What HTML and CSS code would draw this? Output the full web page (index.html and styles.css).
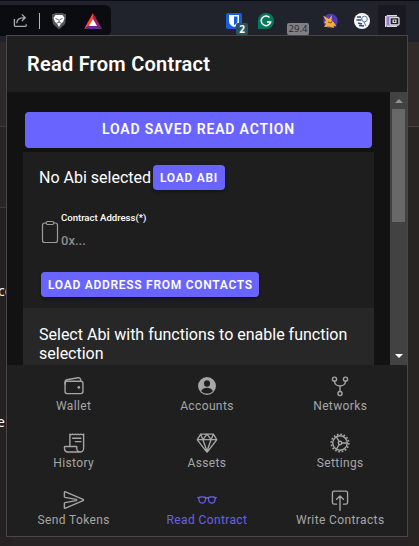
FILE: index.html
```html
<!DOCTYPE html>
<html lang="en">
<head>
<meta charset="utf-8">
<title>Read From Contract</title>
<link rel="stylesheet" href="styles.css">
</head>
<body>
<div class="toolbar">
  <div class="address-end">
    <svg class="share" viewBox="0 0 16 16"><path d="M1.500 6.500v6.500q0 1.300 1.300 1.300h10q1.300 0 1.300-1.300v-1M4 11c0-4 3-6 8.500-6M9.500 1.500 13 5 9.500 8.500"/></svg>
    <span class="divider"></span>
    <svg class="lion" viewBox="0 0 16 18"><path fill="#56575c" d="M4 1h8l1 1 2 0v4l-1 6-6 5.500L2 12 1 6V2l2 0z"/><path fill="#fff" d="M4.500 3h7l2 3-1.500 4-2 1.500L8 15l-2-3.500L4 10 2.500 6z"/><path d="M4.500 6.500 7 7.500M11.500 6.500 9 7.500M8 7v3.500M6 11l2-1 2 1" stroke="#56575c" stroke-width=".9" fill="none"/></svg>
    <svg class="bat" viewBox="0 0 18 16"><path fill="#ff4b2b" d="M9 0 0 16 9 10z"/><path fill="#9e1f63" d="m9 0 9 16-9-6z"/><path fill="#662d91" d="M0 16h18l-9-6z"/><path fill="#fff" d="m9 6-4 7h8z"/></svg>
  </div>
  <div class="extensions">
    <div class="ext vault">
      <svg viewBox="0 0 16 16"><rect width="16" height="16" rx="2" fill="#175ddc"/><path fill="#fff" d="M3 2h10v6q0 4-5 6-5-2-5-6z"/><path fill="#175ddc" d="M8 3.500h3.500V8q0 2.500-3.500 4.200z"/></svg>
      <span class="count">2</span>
    </div>
    <div class="ext grammar"><svg viewBox="0 0 16 16"><path fill="#08785c" d="M8 0a8 8 0 1 1 0 16H0V8a8 8 0 0 1 8-8z"/><path d="M11.500 4.500a4.800 4.800 0 1 0 1.200 4.500H9" stroke="#fff" stroke-width="1.500" fill="none"/></svg></div>
    <div class="ext meter"><span class="value">29.4</span></div>
    <div class="ext fox"><svg viewBox="0 0 16 16"><circle cx="8.500" cy="8" r="7.300" fill="#5139b8"/><path fill="#f5ad42" d="M1 2.500 7 6l3-4-.5 5 2.500 2.500 2.500 4-3-1 .5 2.500-4.500-1.500L2 14l2-3-2-2 2-1z"/><path d="m6 9 3 1 1-2" stroke="#825325" fill="none"/></svg></div>
    <div class="ext coins"><svg viewBox="0 0 16 16"><circle cx="8" cy="8" r="8" fill="#f6f8fb"/><path d="M3 4h4M2.500 7h5M4 10l4 1M5 12.500l5 .5" stroke="#304a70" stroke-width="1.700"/><circle cx="10.500" cy="6" r="2.800" fill="none" stroke="#6275a0"/><path d="m10 9 2 4" stroke="#6275a0"/></svg></div>
    <div class="ext purse"><svg viewBox="0 0 16 16"><path fill="#9679c8" d="M2 2.500h4v11H2z"/><path fill="#ddd8e3" d="M1 3h1.500v11H1zM3 2h10v1.500H3zM3 12.500h10V14H3z"/><rect x="6" y="4.500" width="9" height="7.500" rx="1" fill="#222329" stroke="#dedee4" stroke-width="1.300"/><rect x="8.500" y="6.500" width="4" height="3.500" fill="#ddd"/><path fill="#222" d="M9.800 7.500h1.500V9H9.800z"/></svg></div>
  </div>
</div>
<main class="backdrop">
  <div class="side left"><p class="fragment first">co</p><p class="fragment">e</p></div>
  <div class="side right"></div>
</main>
<section class="popup">
  <header class="header"><h1>Read From Contract</h1></header>
  <div class="viewport">
    <div class="content">
      <button class="button wide">LOAD SAVED READ ACTION</button>
      <div class="panel">
        <div class="abi"><span>No Abi selected</span><button class="button small">LOAD ABI</button></div>
        <div class="address">
          <svg class="clipboard" viewBox="0 0 512 512"><path d="M336 64h32a48 48 0 0 1 48 48v320a48 48 0 0 1-48 48H144a48 48 0 0 1-48-48V112a48 48 0 0 1 48-48h32"/><rect x="176" y="32" width="160" height="64" rx="26"/></svg>
          <div class="field"><label>Contract Address(*)</label><span class="placeholder">0x...</span></div>
        </div>
        <button class="button small contacts">LOAD ADDRESS FROM CONTACTS</button>
      </div>
      <div class="notice">Select Abi with functions to enable function selection</div>
    </div>
    <div class="scrollbar"><span class="up"></span><span class="thumb"></span><span class="down"></span></div>
  </div>
  <nav class="tabs">
    <a class="tab"><svg viewBox="0 0 512 512"><rect x="48" y="144" width="416" height="288" rx="48"/><path d="M411 144v-30a50 50 0 0 0-59-49L89 110a50 50 0 0 0-41 49v49"/><circle class="fill" cx="368" cy="288" r="32"/></svg><span>Wallet</span></a>
    <a class="tab"><svg viewBox="0 0 512 512"><circle class="fill" cx="256" cy="256" r="208"/><ellipse class="hole" cx="256" cy="200" rx="70" ry="76"/><path class="hole" d="M119 370c28-49 81-74 137-74s109 25 137 74c-34 42-83 62-137 62s-103-20-137-62z"/></svg><span>Accounts</span></a>
    <a class="tab"><svg viewBox="0 0 512 512"><circle cx="128" cy="96" r="48"/><circle cx="384" cy="96" r="48"/><circle cx="256" cy="432" r="48"/><path d="M256 256v128M128 144c0 75 69 112 128 112M384 144c0 75-69 112-128 112"/></svg><span>Networks</span></a>
    <a class="tab"><svg viewBox="0 0 512 512"><path d="M160 336V48l32 16 32-16 32 16 32-16 32 16 32-16 32 16 32-16 32 16 32-16v336a80 80 0 0 1-160 0v-48H48a16 16 0 0 0-16 16c0 64 7 112 80 112h288M224 144h192M288 224h128"/></svg><span>History</span></a>
    <a class="tab"><svg viewBox="0 0 512 512"><path d="m35 188 208 270a16 16 0 0 0 26 0l208-270a17 17 0 0 0 1-19L407 56a16 16 0 0 0-14-8H119a16 16 0 0 0-14 8L34 169a17 17 0 0 0 1 19zM48 176h416M400 64l-48 112-96-128M112 64l48 112 96-128M256 448l-96-272M256 448l96-272"/></svg><span>Assets</span></a>
    <a class="tab"><svg viewBox="0 0 512 512"><circle cx="256" cy="256" r="168"/><circle class="teeth" cx="256" cy="256" r="202" pathLength="32"/><circle cx="256" cy="256" r="40"/><path d="M296 256h128M236 221 172 110M236 291l-64 111"/></svg><span>Settings</span></a>
    <a class="tab"><svg viewBox="0 0 512 512"><path d="M32 72v105q0 14 14 17l260 48c18 4 18 24 0 28L46 318q-14 3-14 17v105q0 14 13 9l422-177q22-16 0-32L45 63q-13-5-13 9z"/></svg><span>Send Tokens</span></a>
    <a class="tab active"><svg viewBox="0 0 512 512"><path d="M224 232a32 32 0 0 1 64 0M448 200h24M64 200H40M64 200c0 96 16 128 80 128s80-32 80-128c0 0-16-16-80-16s-80 16-80 16zM448 200c0 96-16 128-80 128s-80-32-80-128c0 0 16-16 80-16s80 16 80 16z"/></svg><span>Read Contract</span></a>
    <a class="tab"><svg viewBox="0 0 512 512"><path d="M336 352h56a40 40 0 0 0 40-40V88a40 40 0 0 0-40-40H120a40 40 0 0 0-40 40v224a40 40 0 0 0 40 40h56M176 240l80-80 80 80M256 496V176"/></svg><span>Write Contracts</span></a>
  </nav>
</section>
</body>
</html>
```
FILE: styles.css
```css
* { box-sizing: border-box; }
body {
  margin: 0;
  position: relative;
  width: 419px;
  height: 546px;
  overflow: hidden;
  display: flex;
  flex-direction: column;
  background: #272223;
  color: #fff;
  font-family: Roboto, sans-serif;
}
.toolbar {
  height: 42px;
  flex: none;
  display: flex;
  justify-content: space-between;
  background: #20232b;
  border-top: 1px solid #0c0d14;
}
.address-end {
  width: 111px;
  height: 31px;
  margin-top: 4px;
  padding-left: 13px;
  display: flex;
  align-items: center;
  border-radius: 0 6px 6px 0;
  background: #0b0b12;
}
.share { width: 15px; height: 15px; fill: none; stroke: #a9a9ad; stroke-width: 1.4; }
.divider { width: 1px; height: 16px; margin: 0 11px; background: #b5b5b9; }
.lion { width: 16px; height: 18px; }
.bat { width: 18px; height: 16px; margin-left: 17px; }
.extensions { display: flex; padding-top: 4px; width: 201px; }
.ext {
  position: relative;
  flex: none;
  width: 32px;
  height: 32px;
  display: flex;
  align-items: center;
  justify-content: center;
}
.ext svg { width: 16px; height: 16px; }
.count {
  position: absolute;
  left: 18px;
  top: 18px;
  width: 12px;
  height: 12px;
  border-radius: 2px;
  background: #2b5260;
  font: 700 10px/12px "Open Sans", sans-serif;
  text-align: center;
}
.value {
  margin-top: 16px;
  padding: 0 2px;
  border-radius: 2px;
  background: #808084;
  color: #26272b;
  font: 500 9.500px/12px "Open Sans", sans-serif;
}
.purse { width: 28px; background: #191a21; }
.backdrop { flex: 1; display: flex; justify-content: space-between; }
.side { width: 12px; }
.left {
  display: flex;
  flex-direction: column;
  background: linear-gradient(#2d292a 0 84px, #3e3a3b 84px 85px, #282425 85px 165px, #3e3a3b 165px 166px, #252122 166px);
}
.right { background: linear-gradient(#302b29 0 84px, #48413d 84px 85px, #282422 85px); }
.fragment {
  margin: 113px 0 0 -3px;
  font: 14px/18px "Open Sans", sans-serif;
}
.fragment.first { margin: 240px 0 0 -2px; }
.popup {
  position: absolute;
  left: 6px;
  top: 35px;
  width: 402px;
  height: 502px;
  border: 1px solid #494847;
  background: #1f1f1f;
  display: flex;
  flex-direction: column;
}
.header { height: 56px; flex: none; padding: 16px 20px; }
h1 { margin: 0; font-size: 20px; line-height: 24px; font-weight: 600; letter-spacing: .24px; white-space: nowrap; }
.viewport { height: 273px; flex: none; display: flex; overflow: hidden; background: #121212; }
.content { flex: 1; padding: 20px 16px 0; }
.button {
  display: block;
  border: 0;
  margin: 0;
  background: #6a64ff;
  color: #fff;
  font-family: Roboto, sans-serif;
  font-weight: 600;
  white-space: nowrap;
}
.wide {
  width: 347px;
  height: 36px;
  margin-left: 2px;
  padding: 0 6px 2px;
  border-radius: 4px;
  font-size: 14px;
  letter-spacing: .84px;
}
.panel { width: 351px; height: 156px; margin-top: 4px; padding: 13px 16px 0; background: #1e1e1e; }
.abi { display: flex; align-items: center; gap: 2px; height: 25px; font-size: 16px; white-space: nowrap; }
.small {
  height: 25px;
  padding: 0 7px;
  border-radius: 4px;
  font-size: 12px;
  letter-spacing: .72px;
  box-shadow: 0 2px 3px #0005;
}
.address { display: flex; height: 82px; padding-top: 20px; }
.clipboard { width: 24px; height: 24px; margin: 10px -2px 0 -1px; fill: none; stroke: #9a9a9a; stroke-width: 26; }
.field { display: flex; flex-direction: column; padding: 1px 0 0 1px; }
label { font-size: 9.600px; line-height: 14px; font-weight: 500; letter-spacing: -.02px; white-space: nowrap; }
.placeholder { margin-top: 7px; font-size: 13px; line-height: 18px; font-weight: 500; color: #8c8c8c; }
.contacts { width: 218px; margin-left: 2px; }
.notice { width: 351px; height: 70px; padding: 17px 16px 0; background: #272727; font-size: 16px; line-height: 19px; }
.scrollbar {
  width: 17px;
  flex: none;
  display: flex;
  flex-direction: column;
  align-items: center;
  background: #424242;
}
.up, .down { border: 4px solid transparent; }
.up { border-top: 0; border-bottom-color: #909090; margin-top: 7px; }
.thumb { width: 13px; height: 113px; margin-top: 6px; background: #686868; }
.down { border-bottom: 0; border-top-color: #fff; margin: auto 0 7px; }
.tabs {
  flex: 1;
  display: grid;
  grid-template-columns: repeat(3, 133.300px);
  grid-auto-rows: 57px;
}
.tab {
  display: flex;
  flex-direction: column;
  align-items: center;
  padding-top: 10px;
  color: #a6a6a6;
  font-size: 12px;
  line-height: 18px;
  letter-spacing: .38px;
}
.tab svg { width: 22px; height: 22px; fill: none; stroke: currentColor; stroke-width: 32; stroke-linecap: round; stroke-linejoin: round; }
.tab .fill { fill: currentColor; stroke: none; }
.tab .hole { fill: #1f1f1f; stroke: none; }
.tab .teeth { stroke-width: 40; stroke-linecap: butt; stroke-dasharray: 1 1; }
.tab.active { color: #6a5ff0; }
```
